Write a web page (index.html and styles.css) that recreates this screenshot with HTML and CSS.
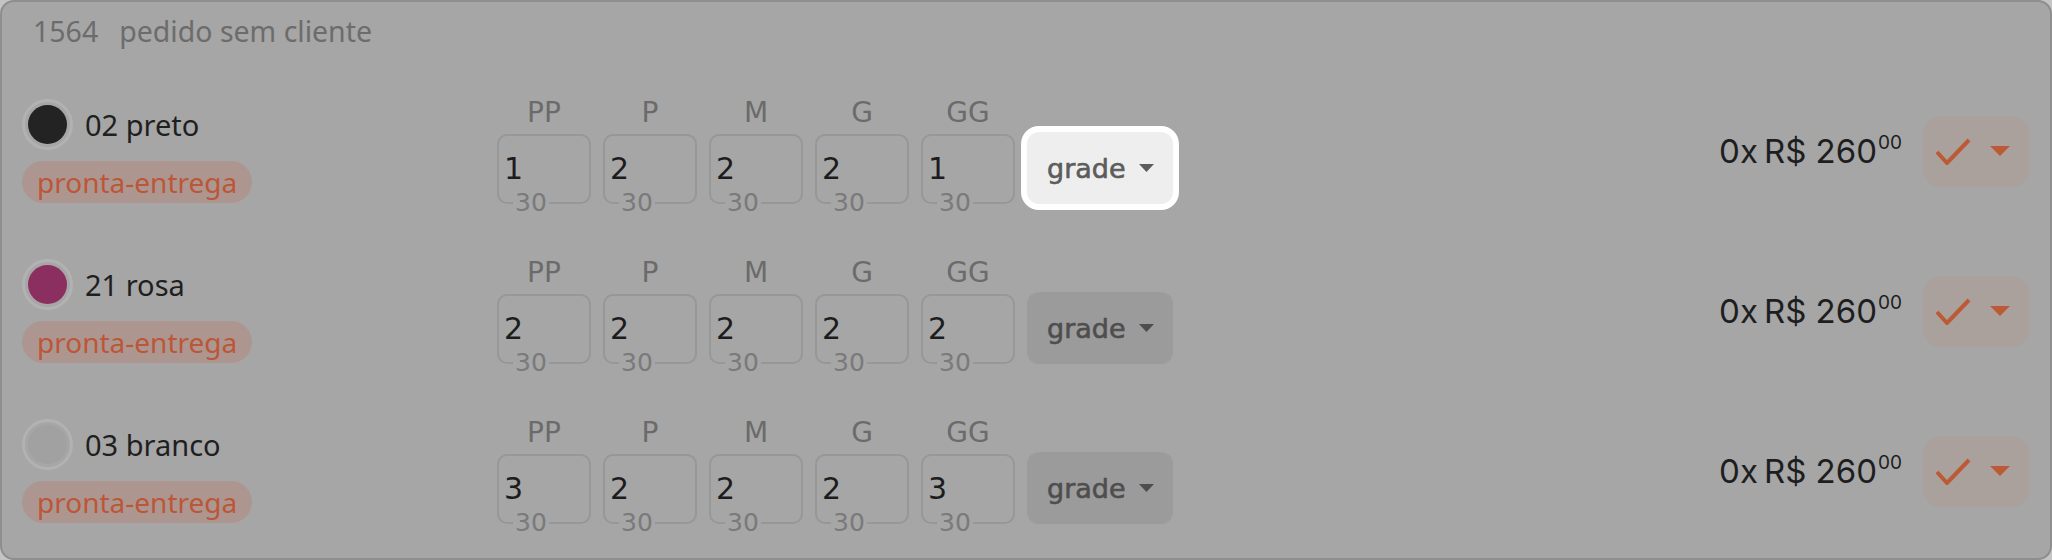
FILE: index.html
```html
<!DOCTYPE html>
<html lang="pt-BR">
<head>
<meta charset="utf-8">
<title>Pedido 1564</title>
<link rel="stylesheet" href="styles.css">
</head>
<body>
<div class="card">
  <div class="head"><span class="num">1564</span><span class="client">pedido sem cliente</span></div>

  <div class="row">
    <div class="info">
      <div class="color"><span class="swatch"><span class="dot dot-preto"></span></span><span class="name">02 preto</span></div>
      <span class="tag">pronta-entrega</span>
    </div>
    <div class="sizes">
      <div class="size"><span class="lbl">PP</span><div class="box"><span class="qty">1</span><span class="stock">30</span></div></div>
      <div class="size"><span class="lbl">P</span><div class="box"><span class="qty">2</span><span class="stock">30</span></div></div>
      <div class="size"><span class="lbl">M</span><div class="box"><span class="qty">2</span><span class="stock">30</span></div></div>
      <div class="size"><span class="lbl">G</span><div class="box"><span class="qty">2</span><span class="stock">30</span></div></div>
      <div class="size"><span class="lbl">GG</span><div class="box"><span class="qty">1</span><span class="stock">30</span></div></div>
      <button class="grade spot">grade<svg class="caret" viewBox="0 0 15 8" width="15" height="8"><polygon points="0,0 15,0 7.5,8"/></svg></button>
    </div>
    <div class="price"><span class="mult">0x</span><span>R$ 260</span><span class="cents">00</span></div>
    <button class="ok"><svg class="check" viewBox="0 0 36 28" width="36" height="28"><polyline points="2,15 12,26 34,3"/></svg><svg class="drop" viewBox="0 0 20 10" width="20" height="10"><polygon points="0,0 20,0 10,10"/></svg></button>
  </div>

  <div class="row">
    <div class="info">
      <div class="color"><span class="swatch"><span class="dot dot-rosa"></span></span><span class="name">21 rosa</span></div>
      <span class="tag">pronta-entrega</span>
    </div>
    <div class="sizes">
      <div class="size"><span class="lbl">PP</span><div class="box"><span class="qty">2</span><span class="stock">30</span></div></div>
      <div class="size"><span class="lbl">P</span><div class="box"><span class="qty">2</span><span class="stock">30</span></div></div>
      <div class="size"><span class="lbl">M</span><div class="box"><span class="qty">2</span><span class="stock">30</span></div></div>
      <div class="size"><span class="lbl">G</span><div class="box"><span class="qty">2</span><span class="stock">30</span></div></div>
      <div class="size"><span class="lbl">GG</span><div class="box"><span class="qty">2</span><span class="stock">30</span></div></div>
      <button class="grade">grade<svg class="caret" viewBox="0 0 15 8" width="15" height="8"><polygon points="0,0 15,0 7.5,8"/></svg></button>
    </div>
    <div class="price"><span class="mult">0x</span><span>R$ 260</span><span class="cents">00</span></div>
    <button class="ok"><svg class="check" viewBox="0 0 36 28" width="36" height="28"><polyline points="2,15 12,26 34,3"/></svg><svg class="drop" viewBox="0 0 20 10" width="20" height="10"><polygon points="0,0 20,0 10,10"/></svg></button>
  </div>

  <div class="row">
    <div class="info">
      <div class="color"><span class="swatch"><span class="dot dot-branco"></span></span><span class="name">03 branco</span></div>
      <span class="tag">pronta-entrega</span>
    </div>
    <div class="sizes">
      <div class="size"><span class="lbl">PP</span><div class="box"><span class="qty">3</span><span class="stock">30</span></div></div>
      <div class="size"><span class="lbl">P</span><div class="box"><span class="qty">2</span><span class="stock">30</span></div></div>
      <div class="size"><span class="lbl">M</span><div class="box"><span class="qty">2</span><span class="stock">30</span></div></div>
      <div class="size"><span class="lbl">G</span><div class="box"><span class="qty">2</span><span class="stock">30</span></div></div>
      <div class="size"><span class="lbl">GG</span><div class="box"><span class="qty">3</span><span class="stock">30</span></div></div>
      <button class="grade">grade<svg class="caret" viewBox="0 0 15 8" width="15" height="8"><polygon points="0,0 15,0 7.5,8"/></svg></button>
    </div>
    <div class="price"><span class="mult">0x</span><span>R$ 260</span><span class="cents">00</span></div>
    <button class="ok"><svg class="check" viewBox="0 0 36 28" width="36" height="28"><polyline points="2,15 12,26 34,3"/></svg><svg class="drop" viewBox="0 0 20 10" width="20" height="10"><polygon points="0,0 20,0 10,10"/></svg></button>
  </div>
</div>
</body>
</html>
```

FILE: styles.css
```css
* { box-sizing: border-box; margin: 0; padding: 0; }
html, body { width: 2052px; height: 560px; overflow: hidden; }
body { background: #c4c4c4; font-family: "Noto Sans", sans-serif; }

.card {
  width: 2052px;
  height: 560px;
  border: 2px solid #8e8e8e;
  border-radius: 14px;
  background: #a6a6a6;
  padding: 0 20px;
  display: flex;
  flex-direction: column;
}

.head {
  height: 69px;
  padding: 9px 0 0 11px;
  display: flex;
  gap: 21px;
  font-size: 28.5px;
  line-height: 40px;
  color: #6c6c6c;
}

.row { height: 160px; display: flex; align-items: center; }

.info { width: 475px; display: flex; flex-direction: column; align-items: flex-start; gap: 11px; }
.color { display: flex; align-items: center; gap: 12px; }
.swatch { width: 51px; height: 51px; border-radius: 50%; border: 3px solid #b2b2b2; padding: 3px; }
.dot { display: block; width: 39px; height: 39px; border-radius: 50%; }
.dot-preto { background: #232323; }
.dot-rosa { background: #8a2f60; }
.dot-branco { background: #a1a1a1; }
.name { font-size: 29px; line-height: 36px; color: #1f1f1f; }
.tag {
  height: 42px;
  line-height: 42px;
  padding: 0 15px;
  border-radius: 21px;
  background: #ad968f;
  color: #bc5638;
  font-size: 28px;
}

.sizes { display: flex; align-items: flex-end; gap: 12px; font-family: "DejaVu Sans", sans-serif; }
.size { width: 94px; display: flex; flex-direction: column; gap: 6px; }
.lbl { text-align: center; font-size: 28px; line-height: 30px; color: #6b6b6b; }
.box {
  position: relative;
  height: 70px;
  border: 2px solid #979797;
  border-radius: 10px;
  padding-left: 5px;
  font-size: 30px;
  line-height: 66px;
  color: #1c1c1c;
}
.stock {
  position: absolute;
  left: 14px;
  bottom: -11px;
  padding: 0 2px;
  background: #a6a6a6;
  font-size: 25px;
  line-height: 20px;
  color: #7a7a7a;
}

.grade {
  height: 72px;
  width: 146px;
  border: none;
  border-radius: 12px;
  background: #9b9b9b;
  color: #4e4e4e;
  font-family: "DejaVu Sans", sans-serif;
  font-size: 27px;
  -webkit-text-stroke: 0.6px currentColor;
  display: flex;
  align-items: center;
  gap: 13px;
  padding: 0 0 0 20px;
}
.grade .caret { fill: currentColor; }
.grade.spot {
  position: relative;
  z-index: 2;
  background: #eeeeee;
  color: #5c5c5c;
  box-shadow: 0 0 0 6px #ffffff;
}

.price {
  margin-left: auto;
  display: flex;
  align-items: flex-start;
  font-family: "Inter", sans-serif;
  font-size: 33px;
  line-height: 40px;
  color: #1e1e1e;
}
.mult { margin-right: 6px; }
.cents { font-size: 19px; line-height: 19px; margin-top: 2px; margin-left: 1px; }

.ok {
  margin-left: 21px;
  width: 107px;
  height: 71px;
  border: none;
  border-radius: 18px;
  background: #aaa19c;
  display: flex;
  align-items: center;
  padding-left: 12px;
  gap: 19px;
}
.check { fill: none; stroke: #bb5a34; stroke-width: 4; }
.drop { fill: #bb5a34; }
```
